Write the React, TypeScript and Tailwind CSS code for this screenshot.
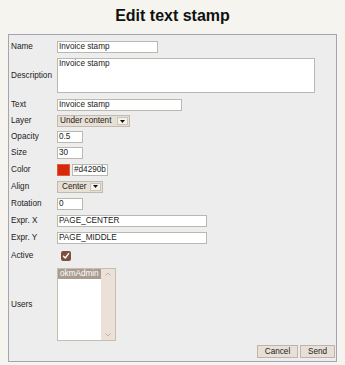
import React from "react";

function Field({ w, children }: { w: string; children?: React.ReactNode }) {
  return (
    <div
      className={`h-[12px] border border-[#b9b9b1] bg-white pl-[1px] text-[8.2px] leading-[10px] text-[#222] whitespace-nowrap overflow-hidden ${w}`}
    >
      {children}
    </div>
  );
}

function Arrow() {
  return (
    <div className="flex h-[8px] w-[11px] items-center justify-center border border-[#c9c2ba] bg-[#f6f3ef]">
      <svg width="5" height="3" viewBox="0 0 5 3">
        <path d="M0 0 L5 0 L2.5 3 Z" fill="#111" />
      </svg>
    </div>
  );
}

function Select({ w, label, pl }: { w: string; label: string; pl: string }) {
  return (
    <div
      className={`flex h-[12px] items-center justify-between border border-[#c2bab0] bg-[#e8dfd5] pr-[1px] text-[8.2px] leading-[10px] text-[#222] ${w} ${pl}`}
    >
      <span>{label}</span>
      <Arrow />
    </div>
  );
}

function Row({ h, label, children }: { h: string; label: string; children?: React.ReactNode }) {
  return (
    <div className={`flex items-center ${h}`}>
      <div className="w-[48px] shrink-0 pl-[2px] text-[8.2px] leading-[10px] text-[#222]">{label}</div>
      {children}
    </div>
  );
}

export default function App() {
  return (
    <div className="h-[365px] w-[345px] bg-[#f5f4ee] font-['Liberation_Sans',Arial,sans-serif]">
      <div className="pt-[6px] text-center text-[16px] font-bold leading-[20px] text-[#111]">Edit text stamp</div>
      <div className="mx-[8px] mt-[8px] h-[328px] border border-[#a4a4b6] bg-[#ededed] pt-[4px]">
        <Row h="h-[16px]" label="Name">
          <Field w="w-[101px]">Invoice stamp</Field>
        </Row>
        <Row h="h-[41px]" label="Description">
          <div className="h-[35px] w-[258px] border border-[#b9b9b1] bg-white pl-[1px] text-[8.2px] leading-[10px] text-[#222]">
            Invoice stamp
          </div>
        </Row>
        <Row h="h-[17px]" label="Text">
          <Field w="w-[125px]">Invoice stamp</Field>
        </Row>
        <Row h="h-[16px]" label="Layer">
          <Select w="w-[73px]" pl="pl-[2px]" label="Under content" />
        </Row>
        <Row h="h-[16px]" label="Opacity">
          <Field w="w-[26px]">0.5</Field>
        </Row>
        <Row h="h-[16px]" label="Size">
          <Field w="w-[26px]">30</Field>
        </Row>
        <Row h="h-[17px]" label="Color">
          <div className="h-[12px] w-[13px] border border-[#e05a3e] bg-[#d4290b]" />
          <div className="ml-[2px]">
            <Field w="w-[36px]">#d4290b</Field>
          </div>
        </Row>
        <Row h="h-[17px]" label="Align">
          <Select w="w-[46px]" pl="pl-[4px]" label="Center" />
        </Row>
        <Row h="h-[17px]" label="Rotation">
          <Field w="w-[26px]">0</Field>
        </Row>
        <Row h="h-[17px]" label="Expr. X">
          <Field w="w-[150px]">PAGE_CENTER</Field>
        </Row>
        <Row h="h-[17px]" label="Expr. Y">
          <Field w="w-[150px]">PAGE_MIDDLE</Field>
        </Row>
        <Row h="h-[20px]" label="Active">
          <div className="ml-[4px] flex h-[10px] w-[10px] items-center justify-center rounded-[2px] bg-[#7e4e3e]">
            <svg width="8" height="8" viewBox="0 0 8 8">
              <path d="M1.5 4.2 L3.3 6 L6.6 1.6" fill="none" stroke="#fff" strokeWidth="1.4" strokeLinecap="round" strokeLinejoin="round" />
            </svg>
          </div>
        </Row>
        <Row h="h-[77px]" label="Users">
          <div className="flex h-[73px] w-[59px] border border-[#c3bdb2] bg-white">
            <div className="w-[44px]">
              <div className="h-[10px] bg-[#aa9c8f] pl-[2px] text-[8.2px] leading-[10px] text-white">okmAdmin</div>
            </div>
            <div className="flex w-[14px] flex-col items-center justify-between bg-[#ebe1d9] py-[3px]">
              <svg width="6" height="4" viewBox="0 0 6 4">
                <path d="M0.5 3.5 L3 1 L5.5 3.5" fill="none" stroke="#b8b0a8" strokeWidth="0.9" />
              </svg>
              <svg width="6" height="4" viewBox="0 0 6 4">
                <path d="M0.5 0.5 L3 3 L5.5 0.5" fill="none" stroke="#b8b0a8" strokeWidth="0.9" />
              </svg>
            </div>
          </div>
        </Row>
        <div className="flex h-[17px] items-center justify-end gap-[2px] pr-[1px]">
          <div className="flex h-[13px] w-[41px] items-center justify-center border border-[#bdb5ab] bg-[#e8dfd6] text-[8.2px] leading-[10px] text-[#222]">
            Cancel
          </div>
          <div className="flex h-[13px] w-[35px] items-center justify-center border border-[#bdb5ab] bg-[#e8dfd6] text-[8.2px] leading-[10px] text-[#222]">
            Send
          </div>
        </div>
      </div>
    </div>
  );
}
